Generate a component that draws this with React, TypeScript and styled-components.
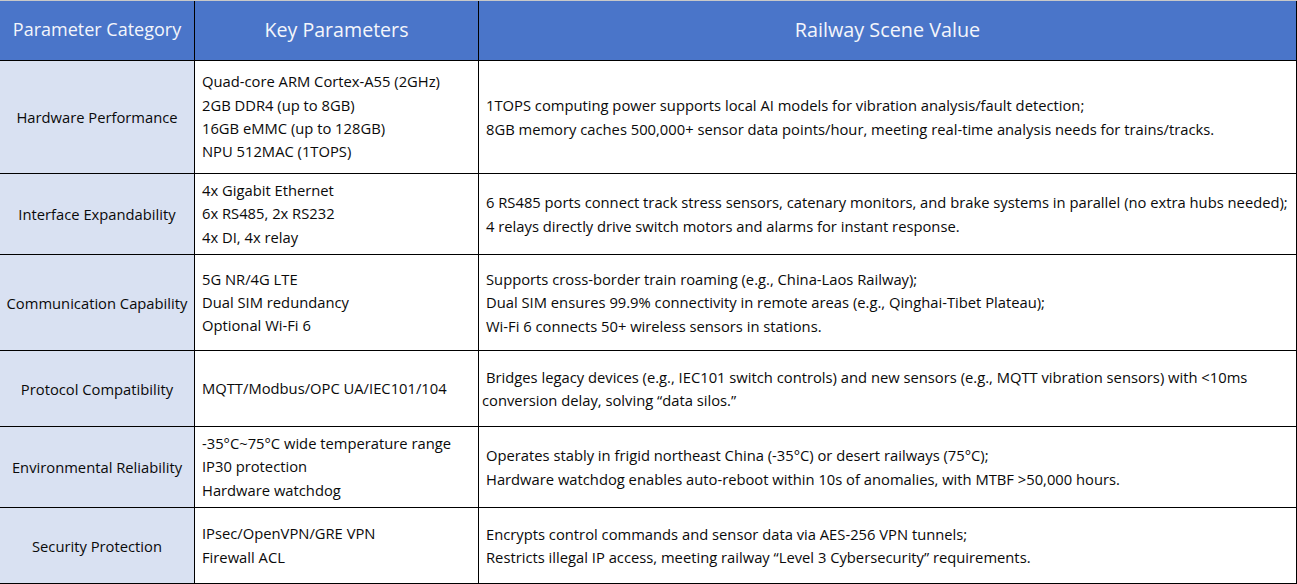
import { Fragment } from "react";
import styled, { createGlobalStyle } from "styled-components";

type Row = {
  category: string;
  params: string[];
  value: { text: string; cont?: boolean }[];
};

const rows: Row[] = [
  {
    category: "Hardware Performance",
    params: [
      "Quad-core ARM Cortex-A55 (2GHz)",
      "2GB DDR4 (up to 8GB)",
      "16GB eMMC (up to 128GB)",
      "NPU 512MAC (1TOPS)",
    ],
    value: [
      { text: "1TOPS computing power supports local AI models for vibration analysis/fault detection;" },
      { text: "8GB memory caches 500,000+ sensor data points/hour, meeting real-time analysis needs for trains/tracks." },
    ],
  },
  {
    category: "Interface Expandability",
    params: ["4x Gigabit Ethernet", "6x RS485, 2x RS232", "4x DI, 4x relay"],
    value: [
      { text: "6 RS485 ports connect track stress sensors, catenary monitors, and brake systems in parallel (no extra hubs needed);" },
      { text: "4 relays directly drive switch motors and alarms for instant response." },
    ],
  },
  {
    category: "Communication Capability",
    params: ["5G NR/4G LTE", "Dual SIM redundancy", "Optional Wi-Fi 6"],
    value: [
      { text: "Supports cross-border train roaming (e.g., China-Laos Railway);" },
      { text: "Dual SIM ensures 99.9% connectivity in remote areas (e.g., Qinghai-Tibet Plateau);" },
      { text: "Wi-Fi 6 connects 50+ wireless sensors in stations." },
    ],
  },
  {
    category: "Protocol Compatibility",
    params: ["MQTT/Modbus/OPC UA/IEC101/104"],
    value: [
      { text: "Bridges legacy devices (e.g., IEC101 switch controls) and new sensors (e.g., MQTT vibration sensors) with <10ms" },
      { text: "conversion delay, solving “data silos.”", cont: true },
    ],
  },
  {
    category: "Environmental Reliability",
    params: ["-35°C~75°C wide temperature range", "IP30 protection", "Hardware watchdog"],
    value: [
      { text: "Operates stably in frigid northeast China (-35°C) or desert railways (75°C);" },
      { text: "Hardware watchdog enables auto-reboot within 10s of anomalies, with MTBF >50,000 hours." },
    ],
  },
  {
    category: "Security Protection",
    params: ["IPsec/OpenVPN/GRE VPN", "Firewall ACL"],
    value: [
      { text: "Encrypts control commands and sensor data via AES-256 VPN tunnels;" },
      { text: "Restricts illegal IP access, meeting railway “Level 3 Cybersecurity” requirements." },
    ],
  },
];

const GlobalStyle = createGlobalStyle`
  html, body {
    margin: 0;
    padding: 0;
    background: #ffffff;
  }
  body {
    font-family: "Open Sans", "Noto Sans", Arial, sans-serif;
    color: #0a0a0a;
  }
`;

const Table = styled.div`
  display: grid;
  grid-template-columns: 195px 284px 818px;
  grid-template-rows: 60px 113px 81px 96px 76px 81px 76px;
  width: 1297px;
  border-top: 1px solid #c8c8c8;
`;

const Cell = styled.div`
  box-sizing: border-box;
  border-right: 1px solid #000;
  border-bottom: 1px solid #000;
  display: flex;
  flex-direction: column;
  justify-content: center;
  font-size: 14.75px;
  line-height: 23.3px;
  white-space: nowrap;
  overflow: hidden;
`;

const HeadCell = styled(Cell)<{ $size: number }>`
  background: #4a75c9;
  color: #f4f6fb;
  align-items: center;
  font-size: ${(p) => p.$size}px;
  padding-bottom: 1px;
`;

const CategoryCell = styled(Cell)`
  background: #d9e1f2;
  align-items: center;
  text-align: center;
  padding-top: 2px;
`;

const ParamCell = styled(Cell)`
  padding-left: 7px;
`;

const ValueCell = styled(Cell)`
  padding-left: 3px;
  padding-top: 1px;
`;

const Line = styled.div<{ $cont?: boolean }>`
  padding-left: ${(p) => (p.$cont ? 0 : 4)}px;
`;

export default function App() {
  return (
    <>
      <GlobalStyle />
      <Table>
        <HeadCell $size={18}>Parameter Category</HeadCell>
        <HeadCell $size={19.6}>Key Parameters</HeadCell>
        <HeadCell $size={19.8}>Railway Scene Value</HeadCell>
        {rows.map((row) => (
          <Fragment key={row.category}>
            <CategoryCell>{row.category}</CategoryCell>
            <ParamCell>
              {row.params.map((p) => (
                <Line $cont key={p}>
                  {p}
                </Line>
              ))}
            </ParamCell>
            <ValueCell>
              {row.value.map((v) => (
                <Line $cont={v.cont} key={v.text}>
                  {v.text}
                </Line>
              ))}
            </ValueCell>
          </Fragment>
        ))}
      </Table>
    </>
  );
}
